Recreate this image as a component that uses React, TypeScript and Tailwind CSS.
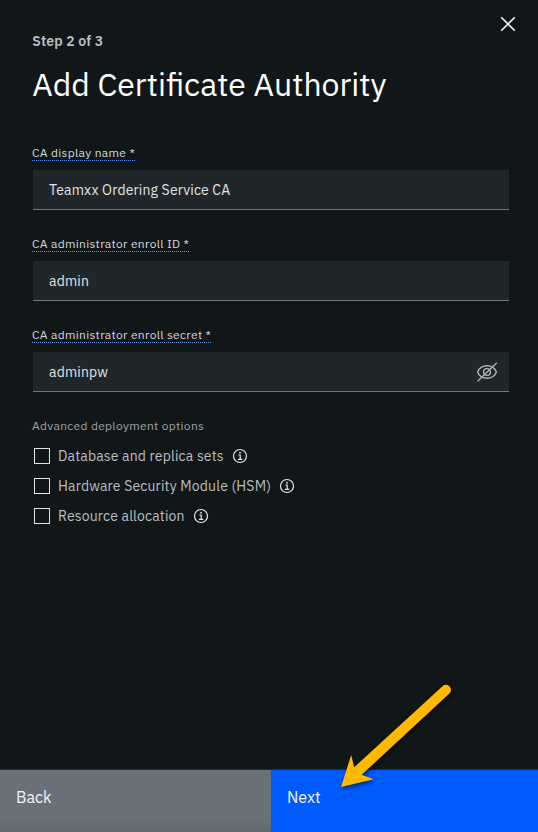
import React from "react";

function Info() {
  return (
    <svg className="size-4 shrink-0" viewBox="0 0 16 16" fill="none" stroke="#e3e6e8">
      <circle cx="8" cy="8" r="6.5" strokeWidth="1.2" />
      <path d="M6.3 7h1.9v4.2M5.9 11.3h4.4" strokeWidth="1.2" />
      <circle cx="8" cy="4.7" r="0.9" fill="#e3e6e8" stroke="none" />
    </svg>
  );
}

function EyeOff() {
  return (
    <svg className="h-5 w-[22px]" viewBox="0 0 22 20" fill="none" stroke="#aeb4b8" strokeWidth="1.4">
      <path d="M1.6 10C3.1 6.1 7 3.7 11 3.7s7.9 2.4 9.4 6.3c-1.5 3.9-5.4 6.3-9.4 6.3S3.1 13.9 1.6 10z" />
      <circle cx="11" cy="10" r="3.4" />
      <path d="M1.6 19.2L20.8 .7" />
    </svg>
  );
}

function Field({ label, value, secret }: { label: string; value: string; secret?: boolean }) {
  return (
    <div className="h-[91px]">
      <div className="flex h-[24px] items-start">
        <label className="-ml-px h-[15px] border-b border-dotted border-[#5596f5] text-[12px] leading-[14px] tracking-[0.32px] whitespace-nowrap text-[#d5d9dc]">
          {label}
        </label>
      </div>
      <div className="flex h-10 items-center justify-between border-b border-[#6f7579] bg-[#20272a] pr-[11px] pl-4 text-[14px] tracking-[0.16px] text-[#e1e4e6]">
        <span className="pt-px">{value}</span>
        {secret && <EyeOff />}
      </div>
    </div>
  );
}

function Option({ text }: { text: string }) {
  return (
    <div className="flex h-[30px] items-center pl-px">
      <span className="size-4 border border-[#e3e6e8]" />
      <span className="ml-2 text-[14px] tracking-[0.16px] whitespace-nowrap text-[#b9bfc3]">{text}</span>
      <span className="ml-2"><Info /></span>
    </div>
  );
}

export default function App() {
  return (
    <div className="relative flex h-[832px] w-[538px] flex-col overflow-hidden bg-[#111719] font-['IBM_Plex_Sans',Roboto,sans-serif]">
      <main className="flex-1 pr-[29px] pl-[33px]">
        <header className="h-[146px] pt-[31px]">
          <div className="-ml-[0.7px] text-[14px] leading-5 font-semibold tracking-[0.16px] text-[#b9bfc3]">Step 2 of 3</div>
          <h1 className="mt-[13px] -ml-[0.8px] text-[32px] leading-10 font-normal whitespace-nowrap text-white">Add Certificate Authority</h1>
        </header>
        <Field label="CA display name *" value="Teamxx Ordering Service CA" />
        <Field label="CA administrator enroll ID *" value="admin" />
        <Field label="CA administrator enroll secret *" value="adminpw" secret />
        <div className="-ml-px h-[22px] text-[12px] leading-[14px] tracking-[0.32px] text-[#9fa5a9]">Advanced deployment options</div>
        <Option text="Database and replica sets" />
        <Option text="Hardware Security Module (HSM)" />
        <Option text="Resource allocation" />
      </main>
      <button aria-label="Close" className="absolute top-[16px] right-[22px] size-4">
        <svg className="size-4" viewBox="0 0 16 16" fill="none" stroke="#f0f2f3" strokeWidth="1.6">
          <path d="M1.2 1.2l13.6 13.6M14.8 1.2L1.2 14.8" />
        </svg>
      </button>
      <footer className="flex h-[63px] border-t border-[#252b30] text-[16px] leading-5 text-[#f2f4f8]">
        <button className="flex w-[271px] items-start bg-gradient-to-b from-[#697077] from-80% to-[#62686f] pt-[17px] pl-4">Back</button>
        <button className="flex flex-1 items-start bg-[#005bff] pt-[17px] pl-4">Next</button>
      </footer>
      <svg className="pointer-events-none absolute top-[670px] left-[310px] h-[140px] w-[180px] drop-shadow-[1px_2px_2px_rgba(0,0,0,0.6)]" viewBox="0 0 180 140">
        <path d="M132.5 16.2A5 5 0 0 1 139.4 23.5L51.7 104.8 63.7 109.3 31 117 41.2 85 44.2 97.2z" fill="#ffb900" />
      </svg>
    </div>
  );
}
